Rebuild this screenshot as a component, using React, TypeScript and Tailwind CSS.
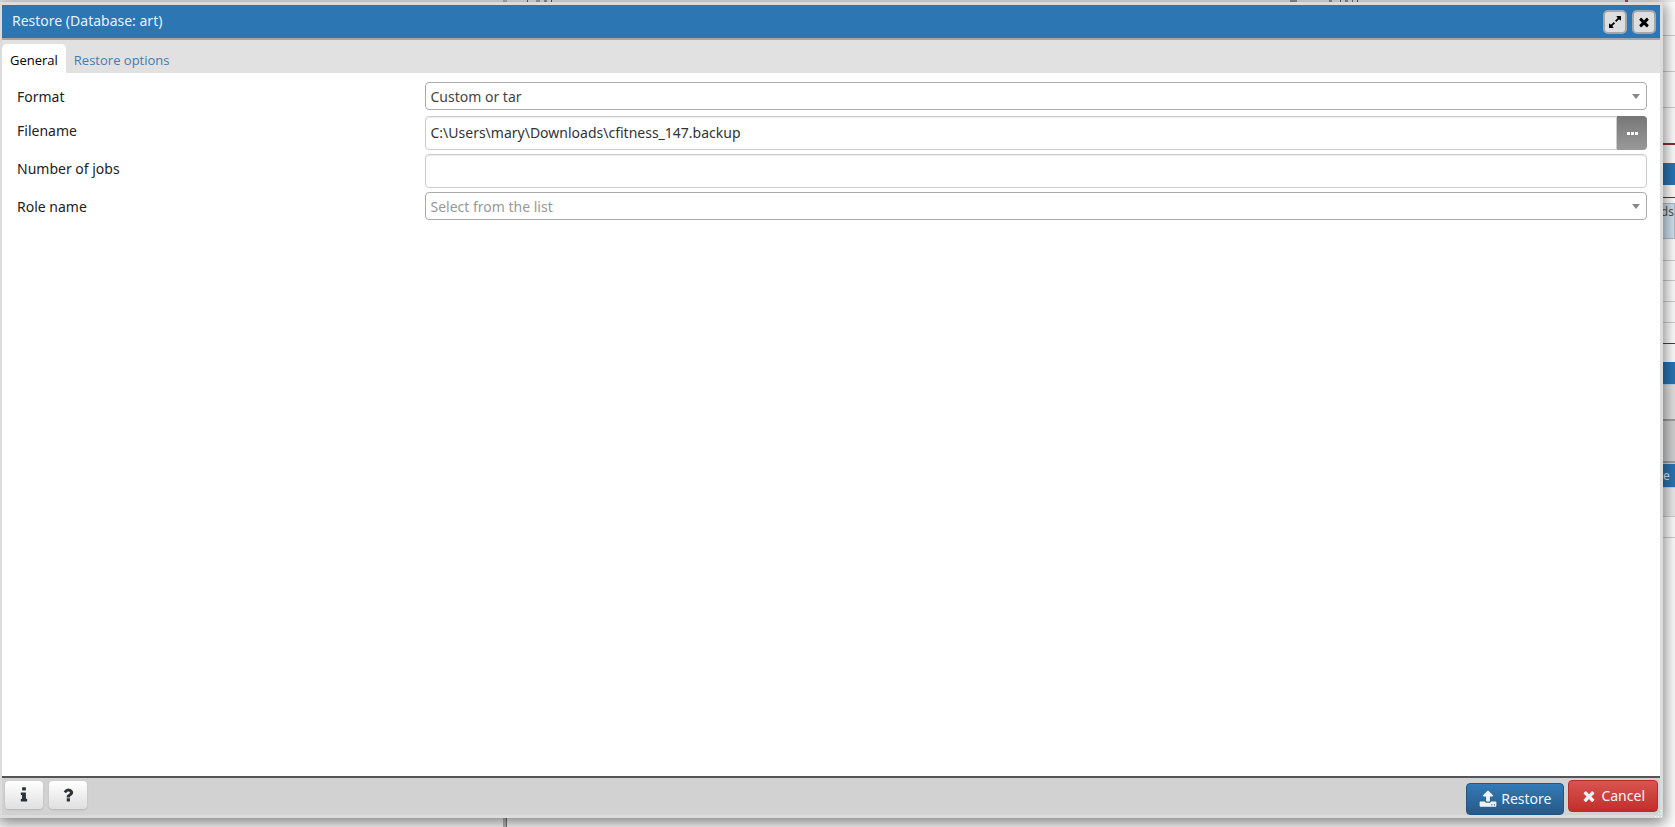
import React, { useState } from 'react';

const tabs = ['General', 'Restore options'];

const icons = {
    times: 'M1490 1322q0 40-28 68l-136 136q-28 28-68 28t-68-28l-294-294-294 294q-28 28-68 28t-68-28l-136-136q-28-28-28-68t28-68l294-294-294-294q-28-28-28-68t28-68l136-136q28-28 68-28t68 28l294 294 294-294q28-28 68-28t68 28l136 136q28 28 28 68t-28 68l-294 294 294 294q28 28 28 68z',
    expand: 'M883 1056q0 13-10 23l-332 332 144 144q19 19 19 45t-19 45-45 19h-448q-26 0-45-19t-19-45v-448q0-26 19-45t45-19 45 19l144 144 332-332q10-10 23-10t23 10l114 114q10 10 10 23zm781-864v448q0 26-19 45t-45 19-45-19l-144-144-332 332q-10 10-23 10t-23-10l-114-114q-10-10-10-23t10-23l332-332-144-144q-19-19-19-45t19-45 45-19h448q26 0 45 19t19 45z',
    upload: 'M1344 1472q0-26-19-45t-45-19-45 19-19 45 19 45 45 19 45-19 19-45zm256 0q0-26-19-45t-45-19-45 19-19 45 19 45 45 19 45-19 19-45zm128-224v320q0 40-28 68t-68 28h-1472q-40 0-68-28t-28-68v-320q0-40 28-68t68-28h427q21 56 70.5 92t110.500 36h256q61 0 110.500-36t70.500-92h427q40 0 68 28t28 68zm-325-648q-17 40-59 40h-256v448q0 26-19 45t-45 19h-256q-26 0-45-19t-19-45v-448h-256q-42 0-59-40-17-39 14-69l448-448q18-19 45-19t45 19l448 448q31 30 14 69z',
    info: 'M1216 1344v128q0 26-19 45t-45 19h-512q-26 0-45-19t-19-45v-128q0-26 19-45t45-19h64v-384h-64q-26 0-45-19t-19-45v-128q0-26 19-45t45-19h384q26 0 45 19t19 45v576h64q26 0 45 19t19 45zm-128-1152v192q0 26-19 45t-45 19h-256q-26 0-45-19t-19-45v-192q0-26 19-45t45-19h256q26 0 45 19t19 45z',
    question: 'M1088 1256v240q0 16-12 28t-28 12h-240q-16 0-28-12t-12-28v-240q0-16 12-28t28-12h240q16 0 28 12t12 28zm316-600q0 54-15.500 101t-35 76.500-55 59.500-57.500 43.500-61 35.500q-41 23-68.500 65t-27.500 67q0 17-12 32.500t-28 15.500h-240q-15 0-25.500-18.500t-10.500-37.500v-45q0-83 65-156.500t143-108.500q59-27 84-56t25-76q0-42-46.500-74t-107.500-32q-65 0-108 29-35 25-107 115-13 16-31 16-12 0-25-8l-164-125q-13-10-15.500-25t5.500-28q160-266 464-266 80 0 161 31t146 83 106 127.500 41 158.500z',
};

// Slices of the dashboard that stay visible to the right of the dialog.
const backdropRows: { className: string; text?: string }[] = [
    { className: 'h-[34px] border-b border-[#cfcfcf]' },
    { className: 'h-9 border-b border-[#cfcfcf]' },
    { className: 'h-9 border-b border-[#cfcfcf]' },
    { className: 'h-[37px] border-b-2 border-[#8c3038]' },
    { className: 'h-[18px]' },
    { className: 'h-[22px] bg-[#2c76b4]' },
    { className: 'h-[13px] border-b border-[#444444]' },
    { className: 'h-[5px]' },
    { className: 'flex h-9 justify-end border border-l-0 border-[#b4bcc3] bg-[#d0e2f2] text-[#555555]', text: 'ds' },
    { className: 'h-[22px] border-b border-[#cfcfcf]' },
    { className: 'h-5 border-b border-[#cfcfcf]' },
    { className: 'h-[21px] border-b border-[#cfcfcf]' },
    { className: 'h-[21px] border-b border-[#cfcfcf]' },
    { className: 'h-[21px] border-b border-[#444444]' },
    { className: 'h-[18px]' },
    { className: 'h-[23px] border-b border-[#bcd9f0] bg-[#2c76b4]' },
    { className: 'h-9 border-b-2 border-[#a0a0a0] bg-[#e2e2e2]' },
    { className: 'h-[42px] border-b-2 border-[#a0a0a0] bg-[#d2d2d2]' },
    { className: 'flex h-[25px] items-center border-y border-[#bcd9f0] bg-[#2c76b4] text-[#e4eef7]', text: 'e' },
    { className: 'h-[29px] border-b border-[#cfcfcf] bg-[#ececec]' },
    { className: 'h-[21px] border-b border-[#cfcfcf]' },
];

const Icon: React.FC<{ name: keyof typeof icons; className: string }> = ({ name, className }) => (
    <svg viewBox="0 0 1792 1792" fill="currentColor" aria-hidden="true" className={className}>
        <path d={icons[name]} />
    </svg>
);

const SelectBox: React.FC<{ id: string; options: string[]; muted?: boolean }> = ({ id, options, muted }) => (
    <div className="relative">
        <select
            id={id}
            className={`block h-7 w-full appearance-none rounded border border-[#aaaaaa] bg-white pt-px pr-6 pl-1 ${muted ? 'text-[#999999]' : 'text-[#444444]'}`}
        >
            {options.map(option => (
                <option key={option}>{option}</option>
            ))}
        </select>
        <span className="pointer-events-none absolute top-3 right-[7px] border-x-4 border-t-5 border-x-transparent border-t-[#888888]" />
    </div>
);

const Field: React.FC<{ id: string; label: string; children: React.ReactNode }> = ({ id, label, children }) => (
    <div className="grid grid-cols-[25fr_75fr] items-start">
        <label htmlFor={id} className="pt-[5px] leading-5 text-[#222222]">{label}</label>
        <div className="pl-px">{children}</div>
    </div>
);

const inputClass = 'block h-[34px] w-full border border-[#cccccc] bg-white px-1 text-[#333333] shadow-[inset_0_1px_1px_rgba(0,0,0,0.08)]';
const titleButton = 'flex size-6 items-center justify-center rounded-[5px] border-2 border-[#a6a6a6] bg-[#dedede] text-black';
const helpButton = 'flex h-7 w-[38px] items-center justify-center rounded bg-linear-to-b from-white to-[#e0e0e0] text-[#2c3439] shadow-[0_1px_2px_rgba(0,0,0,0.15)]';
const actionButton = 'flex h-8 items-center gap-1 rounded border px-3 text-[#f2f5f8]';

const App: React.FC = () => {
    const [activeTab, setActiveTab] = useState('General');
    const [filename, setFilename] = useState('C:\\Users\\mary\\Downloads\\cfitness_147.backup');
    const [jobs, setJobs] = useState('');

    return (
        <div className="flex h-screen flex-col overflow-hidden bg-white font-['Noto_Sans',sans-serif] text-sm">
            {/* lower edge of the chart legends above the dialog */}
            <div className="grid h-[2px] shrink-0 grid-cols-[30fr_47fr_20fr_3fr] bg-[#f0f0f0]">
                <div />
                <div className="flex gap-1">
                    <span className="w-1 bg-[#bbbbbb]" />
                    <span className="ml-4 w-px bg-[#666666]" />
                    <span className="ml-1 w-1 bg-[#aaaaaa]" />
                    <span className="w-[3px] bg-[#999999]" />
                    <span className="w-px bg-[#555555]" />
                </div>
                <div className="flex gap-1">
                    <span className="w-[7px] bg-[#999999]" />
                    <span className="ml-7 w-[3px] bg-[#999999]" />
                    <span className="ml-1 w-px bg-[#666666]" />
                    <span className="w-[3px] bg-[#999999]" />
                    <span className="w-px bg-[#777777]" />
                    <span className="w-px bg-[#555555]" />
                </div>
                <div><span className="block h-full w-[3px] bg-[#b8494f]" /></div>
            </div>
            <div className="flex min-h-0 flex-1">
                <main className="relative z-10 flex min-w-0 flex-1 flex-col border-3 border-l-2 border-[#dcdcdc] bg-white shadow-[0_3px_14px_2px_rgba(0,0,0,0.5)]">
                    <header className="flex h-[35px] shrink-0 items-center justify-between border-b-2 border-[#a6a6a6] bg-[#2c76b4] pr-1 pl-[10px]">
                        <h1 className="pb-[2px] text-[#e8f1f8]">Restore (Database: art)</h1>
                        <div className="flex gap-[5px]">
                            <button type="button" aria-label="Maximize" className={titleButton}>
                                <Icon name="expand" className="size-[14px]" />
                            </button>
                            <button type="button" aria-label="Close" className={titleButton}>
                                <Icon name="times" className="size-[14px]" />
                            </button>
                        </div>
                    </header>

                    <nav className="flex h-[33px] shrink-0 items-end bg-[#e1e1e1] font-['Open_Sans',sans-serif] text-[13px]">
                        {tabs.map(tab => (
                            <button
                                key={tab}
                                type="button"
                                onClick={() => setActiveTab(tab)}
                                className={`h-[29px] rounded-t-[5px] px-2 pt-1 ${activeTab === tab ? 'bg-white text-black' : 'text-[#3f7cb4]'}`}
                            >
                                {tab}
                            </button>
                        ))}
                    </nav>

                    <form className="flex flex-1 flex-col pt-[9px] pr-[13px] pl-[15px]">
                        <Field id="format" label="Format">
                            <SelectBox id="format" options={['Custom or tar', 'Directory']} />
                        </Field>
                        <div className="pt-[6px]">
                            <Field id="filename" label="Filename">
                                <div className="flex">
                                    <input id="filename" type="text" value={filename} onChange={e => setFilename(e.target.value)} className={`${inputClass} rounded-l pb-[2px]`} />
                                    <button type="button" aria-label="Browse" className="flex h-[34px] w-[30px] shrink-0 items-center justify-center gap-px rounded-r bg-linear-to-b from-[#777777] to-[#999999]">
                                        <span className="size-[3px] bg-white" />
                                        <span className="size-[3px] bg-white" />
                                        <span className="size-[3px] bg-white" />
                                    </button>
                                </div>
                            </Field>
                        </div>
                        <div className="py-1">
                            <Field id="jobs" label="Number of jobs">
                                <input id="jobs" type="text" value={jobs} onChange={e => setJobs(e.target.value)} className={`${inputClass} rounded`} />
                            </Field>
                        </div>
                        <Field id="role" label="Role name">
                            <SelectBox id="role" options={['Select from the list', 'postgres']} muted />
                        </Field>
                    </form>

                    <footer className="flex h-[39px] shrink-0 items-start justify-between border-t-2 border-[#555555] bg-[#d2d2d2] pr-[2px] pl-[3px]">
                        <div className="flex gap-[6px] pt-[3px]">
                            <button type="button" aria-label="Info" className={helpButton}>
                                <Icon name="info" className="size-[18px]" />
                            </button>
                            <button type="button" aria-label="Help" className={helpButton}>
                                <Icon name="question" className="size-[18px]" />
                            </button>
                        </div>
                        <div className="flex gap-1 pt-[2px]">
                            <button type="button" className={`${actionButton} mt-[3px] border-[#245580] bg-linear-to-b from-[#337ab7] to-[#265a88]`}>
                                <Icon name="upload" className="size-[18px]" />
                                Restore
                            </button>
                            <button type="button" className={`${actionButton} border-[#b92c28] bg-linear-to-b from-[#d9534f] to-[#c12e2a]`}>
                                <Icon name="times" className="size-4" />
                                Cancel
                            </button>
                        </div>
                    </footer>

                    {/* resize grip */}
                    <svg viewBox="0 0 9 9" className="absolute -right-[3px] -bottom-[3px] size-[9px]" fill="#ffffff" aria-hidden="true">
                        <path d="M7 1h1v1H7zM4 4h1v1H4zM7 4h1v1H7zM1 7h1v1H1zM4 7h1v1H4zM7 7h1v1H7z" />
                    </svg>
                </main>

                <aside className="w-3 shrink-0 overflow-hidden text-xs">
                    {backdropRows.map((row, i) => (
                        <div key={i} className={row.className}>{row.text}</div>
                    ))}
                </aside>
            </div>
            <div className="grid h-[9px] shrink-0 grid-cols-[30fr_70fr]">
                <div />
                <div className="flex">
                    <span className="w-[3px] bg-[#bbbbbb]" />
                    <span className="w-px bg-[#777777]" />
                </div>
            </div>
        </div>
    );
};

export default App;
